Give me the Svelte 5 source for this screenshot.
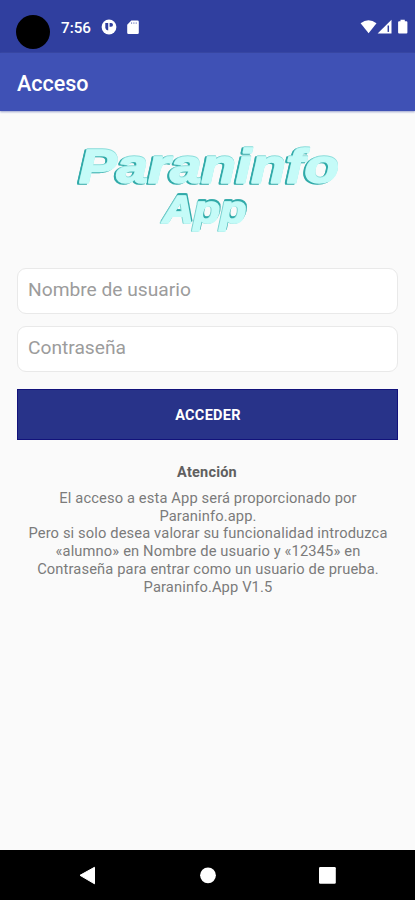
<script>
  let usuario = $state('');
  let clave = $state('');
  const lines = [
    'El acceso a esta App será proporcionado por',
    'Paraninfo.app.',
    'Pero si solo desea valorar su funcionalidad introduzca',
    '«alumno» en Nombre de usuario y «12345» en',
    'Contraseña para entrar como un usuario de prueba.',
    'Paraninfo.App V1.5'
  ];
</script>

<div class="screen">
  <div class="status">
    <div class="camera"></div>
    <span class="time">7:56</span>
    <svg class="notice" width="16" height="16" viewBox="0 0 16 16">
      <circle cx="8" cy="8" r="7.4" fill="#fff" />
      <path d="M4.300 3.900h2.900v7.600a3.400 3.400 0 0 1-2.900-2.600z" fill="#303f9f" />
      <path d="M8.600 3.900h1.500a1.900 1.900 0 0 1 0 3.800H8.600z" fill="#303f9f" />
    </svg>
    <svg class="card" width="12" height="15" viewBox="0 0 12 15">
      <path d="M4.300.5h6.200a1.300 1.300 0 0 1 1.300 1.300v11a1.300 1.300 0 0 1-1.300 1.300h-9A1.300 1.300 0 0 1 .2 12.800V4.700z" fill="#fff" />
      <path d="M4.600 2.200v1.800M6.900 2.200v1.800M9.200 2.200v1.800" stroke="#8d96cd" stroke-width="1" />
    </svg>
    <svg class="signals" width="50" height="18" viewBox="0 0 50 18">
      <path d="M.6 5.200Q8.500-.9 16.500 5.200L8.600 15.200z" fill="#fff" />
      <path d="M31.500 1.800V15.600H17.600z" fill="#fff" />
      <path d="M28.300 7.500v6.400" stroke="#303f9f" stroke-width="1.500" />
      <path d="M40.500 1.800h4.300v1.400h1.600a1 1 0 0 1 1 1V14.600a1 1 0 0 1-1 1h-7.300a1 1 0 0 1-1-1V4.200a1 1 0 0 1 1-1h1.400z" fill="#fff" />
    </svg>
  </div>
  <header><h1>Acceso</h1></header>
  <main>
    <svg class="logo" width="300" height="115" viewBox="60 130 300 115">
      <text class="word main-word" x="81" y="182.500" font-size="48" textLength="260" lengthAdjust="spacingAndGlyphs">Paraninfo</text>
      <text class="word sub-word" x="164.500" y="223" font-size="39" textLength="84" lengthAdjust="spacingAndGlyphs">App</text>
    </svg>
    <form onsubmit={(e) => e.preventDefault()}>
      <input type="text" placeholder="Nombre de usuario" bind:value={usuario} />
      <input type="password" placeholder="Contraseña" bind:value={clave} />
      <button>ACCEDER</button>
    </form>
    <h2>Atención</h2>
    <p>
      {#each lines as line}
        <span>{line}</span>
      {/each}
    </p>
  </main>
  <nav>
    <svg width="415" height="50" viewBox="0 0 415 50">
      <path d="M80 25.300L94.500 17.300V33.800z" fill="#fff" stroke="#fff" stroke-linejoin="round" />
      <circle cx="208" cy="25.300" r="7.900" fill="#fff" />
      <rect x="319" y="17" width="16.800" height="16.800" rx="1.200" fill="#fff" />
    </svg>
  </nav>
</div>

<style>
  :global(body) { margin: 0; }
  .screen {
    width: 415px;
    height: 900px;
    display: flex;
    flex-direction: column;
    background: #fafafa;
    font-family: Roboto, sans-serif;
    overflow: hidden;
  }
  .status {
    height: 53px;
    box-sizing: border-box;
    flex: none;
    display: flex;
    align-items: flex-start;
    padding: 15px 5px 0 16px;
    background: #303f9f;
    color: #fff;
  }
  .camera { width: 34px; height: 34px; border-radius: 50%; background: #000; flex: none; }
  .time { margin: 3px 0 0 11px; width: 30px; font-size: 15.200px; line-height: 20px; font-weight: 500; }
  .notice { margin: 4px 0 0 10px; }
  .card { margin: 5px 0 0 10px; }
  .signals { margin: 3px 0 0 auto; }
  header {
    height: 58px;
    flex: none;
    display: flex;
    align-items: center;
    padding: 3px 0 0 17px;
    box-sizing: border-box;
    background: #3f51b5;
    box-shadow: 0 1px 2px #9aa2cc;
  }
  h1 { margin: 0; font-size: 21.500px; font-weight: 500; color: #fff; }
  main { flex: 1; display: flex; flex-direction: column; align-items: center; padding-top: 19px; }
  .logo { display: block; flex: none; }
  .word {
    font-family: "Liberation Sans", sans-serif;
    font-weight: 700;
    font-style: italic;
    fill: #c5fbf8;
    stroke: #c5fbf8;
    stroke-width: 1.600;
    stroke-linejoin: round;
  }
  .main-word { filter: drop-shadow(0.300px -0.400px 0 #8adcda) drop-shadow(-1.400px 1.400px 0.200px #31aaa9); }
  .sub-word { filter: drop-shadow(-0.600px 0.400px 0 #7bd3d1) drop-shadow(1.200px -1.100px 0.200px #31aaa9); }
  form { width: 381px; margin-top: 23px; display: flex; flex-direction: column; }
  input {
    height: 46px;
    box-sizing: border-box;
    margin: 0 0 12px;
    padding: 0 10px 3px;
    border: 1px solid #e9e9e9;
    border-radius: 9px;
    background: #fff;
    font: 400 19.200px Roboto, sans-serif;
    color: #444;
    outline: none;
  }
  input::placeholder { color: #9c9c9c; opacity: 1; }
  button {
    height: 51px;
    margin: 5px 0 0;
    padding: 2px 0 0;
    border: 1px solid #12127b;
    background: #283389;
    color: #fff;
    font: 700 14.500px Roboto, sans-serif;
    letter-spacing: 0.300px;
    text-indent: 1px;
  }
  h2 { margin: 24px 0 8px; font-size: 14.500px; line-height: 18px; font-weight: 700; color: #606060; letter-spacing: 0.200px; text-indent: -1px; }
  p { margin: 0; display: flex; flex-direction: column; align-items: center; font-size: 14.700px; line-height: 17.700px; color: #7b7b7b; letter-spacing: 0.130px; text-indent: 1px; }
  span { white-space: nowrap; }
  nav { height: 50px; flex: none; background: #000; }
  nav svg { display: block; }
</style>
